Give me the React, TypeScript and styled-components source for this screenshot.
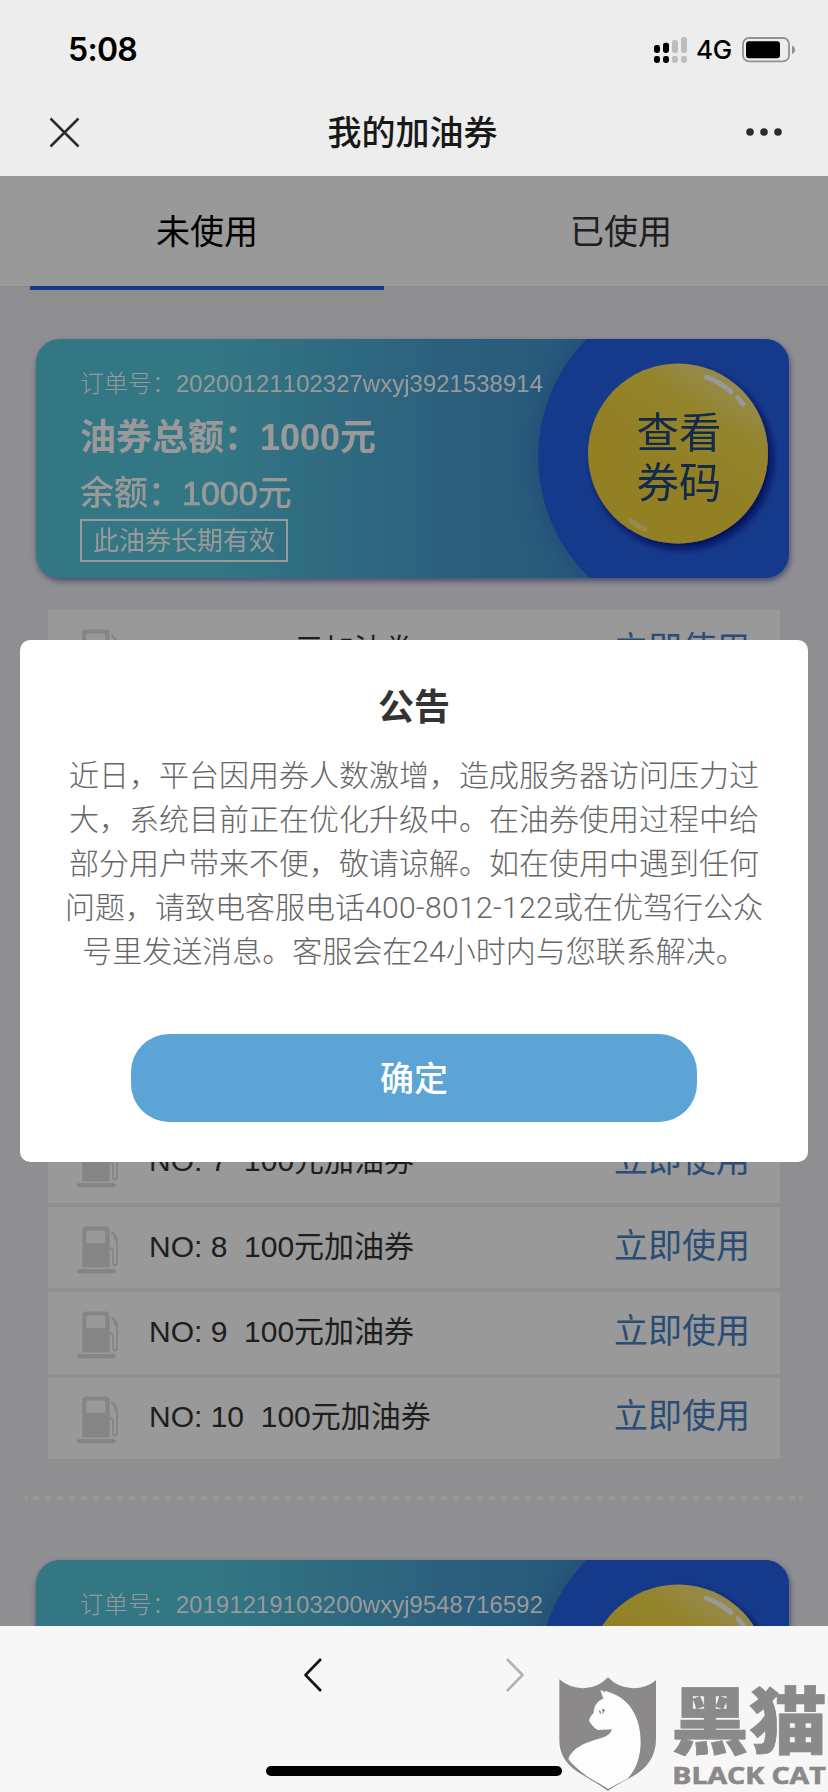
import React from "react";
import styled, { createGlobalStyle } from "styled-components";

const GlobalStyle = createGlobalStyle`
  *, *::before, *::after { box-sizing: border-box; }
  body {
    margin: 0;
    background: #efeff4;
    font-family: "Liberation Sans", "Noto Sans CJK SC", sans-serif;
    text-spacing-trim: space-all;
    font-kerning: none;
  }
  button { font-family: inherit; border: 0; padding: 0; background: none; }
`;

const Screen = styled.div`
  position: relative;
  display: flex;
  flex-direction: column;
  width: 828px;
  height: 1792px;
  overflow: hidden;
`;

const Header = styled.header`
  flex: none;
  height: 176px;
  background: #ededed;
`;

const StatusBar = styled.div`
  display: flex;
  align-items: center;
  justify-content: space-between;
  height: 88px;
  padding: 12px 32px 0 68px;
`;

const Clock = styled.span`
  font: 600 32px/40px Inter, sans-serif;
  letter-spacing: -0.7px;
  color: #000;
`;

const StatusIcons = styled.div`
  display: flex;
  align-items: center;
`;

const Network = styled.span`
  margin: 0 10px 0 8px;
  font: 500 26px/32px Inter, sans-serif;
  letter-spacing: -0.2px;
  color: #000;
`;

const NavBar = styled.div`
  display: flex;
  align-items: center;
  justify-content: space-between;
  height: 88px;
  padding: 0 45px 0 49px;
`;

const NavTitle = styled.h1`
  margin: 0;
  padding-top: 2px;
  font-size: 34px;
  line-height: 44px;
  font-weight: 500;
  color: #181818;
`;

const WebView = styled.main`
  position: relative;
  flex: none;
  height: 1450px;
  overflow: hidden;
  background: #efeff4;
`;

const Tabs = styled.nav`
  display: flex;
  height: 110px;
  background: #fff;
  box-shadow: 0 1px 0 #e4e4e6;
`;

const Tab = styled.button<{ $active?: boolean }>`
  flex: 1;
  display: flex;
  align-items: center;
  justify-content: center;
  padding-top: 2px;
  font-size: 34px;
  line-height: 44px;
  color: ${(p) => (p.$active ? "#000" : "#333")};
`;

const TabIndicator = styled.div`
  width: 354px;
  height: 4px;
  margin-left: 30px;
  position: relative;
  background: #2662e8;
`;

const Voucher = styled.section`
  position: relative;
  display: flex;
  justify-content: space-between;
  height: 239px;
  margin: 0 39px 0 36px;
  border-radius: 24px;
  overflow: hidden;
  background: linear-gradient(90deg, #55c5dc 0%, #55c5dc 24%, #489fd0 55%, #3c88cc 100%);
`;

const VoucherShadow = styled.div`
  border-radius: 24px;
  filter: drop-shadow(1px 3px 3px rgba(56, 64, 150, 0.65));
`;

const VoucherInfo = styled.div`
  position: relative;
  display: flex;
  flex-direction: column;
  align-items: flex-start;
  padding: 28px 0 0 44px;
  color: #fff;
  white-space: nowrap;
`;

const OrderNumber = styled.div`
  font-size: 24px;
  line-height: 34px;
  font-weight: 300;
`;

const Total = styled.div`
  margin-top: 10px;
  font-size: 36px;
  line-height: 54px;
  font-weight: 700;
`;

const Balance = styled.div`
  margin-top: 2px;
  font-size: 34px;
  line-height: 52px;
  font-weight: 500;
`;

const Amount = styled.span`
  -webkit-text-stroke: 0.7px currentColor;
`;

const Validity = styled.div`
  height: 43px;
  padding: 1px 11px 0;
  border: 2px solid #fff;
  font-size: 26px;
  line-height: 38px;
`;

const VoucherArt = styled.svg`
  position: absolute;
  top: 0;
  right: 0;
`;

const CodeButton = styled.button`
  position: relative;
  width: 180px;
  margin-right: 20px;
  padding-top: 1px;
  font-size: 42.5px;
  line-height: 50px;
  color: #1e467f;
  white-space: pre-line;
`;

const CouponList = styled.ul`
  list-style: none;
  margin: 32px 48px 0;
  padding: 0;
`;

const CouponRow = styled.li`
  display: flex;
  align-items: center;
  height: 85.3px;
  padding: 0 30px 0 29px;
  border-bottom: 4px solid #eeeeef;
  background: #fff;
  &:last-child {
    height: 81.3px;
    border-bottom: 0;
  }
`;

const CouponName = styled.span`
  flex: 1;
  margin-left: 31px;
  padding-bottom: 2px;
  font-size: 30px;
  line-height: 40px;
  color: #333;
  white-space: pre;
`;

const UseLink = styled.span`
  padding-bottom: 4px;
  font-size: 34px;
  line-height: 44px;
  color: #4680c4;
`;

const Divider = styled.div`
  height: 4px;
  margin: 37px 25px 60px;
  background: repeating-linear-gradient(90deg, #fff 0 6px, transparent 6px 12px) -4px 0;
`;

const Overlay = styled.div`
  position: absolute;
  inset: 0;
  display: flex;
  align-items: center;
  justify-content: center;
  background: rgba(0, 0, 0, 0.4);
`;

const Dialog = styled.div`
  display: flex;
  flex-direction: column;
  align-items: center;
  width: 788px;
  height: 522px;
  padding-top: 43px;
  border-radius: 10px;
  background: #fff;
`;

const DialogTitle = styled.h2`
  margin: 0;
  font-size: 36px;
  line-height: 50px;
  font-weight: 700;
  color: #333;
`;

const DialogText = styled.p`
  width: 708px;
  margin: 21px 0 0;
  font-family: Roboto, "Noto Sans CJK SC", sans-serif;
  font-size: 30px;
  line-height: 44px;
  font-weight: 300;
  text-align: center;
  color: #666;
`;

const Phone = styled.span`
  letter-spacing: 0.35px;
`;

const Confirm = styled.button`
  width: 566px;
  height: 88px;
  margin-top: 60px;
  padding-bottom: 4px;
  border-radius: 38px;
  background: #5ca4d6;
  color: #fff;
  font-size: 34px;
  font-weight: 500;
`;

const BottomBar = styled.footer`
  position: relative;
  flex: 1;
  display: flex;
  flex-direction: column;
  align-items: center;
  justify-content: space-between;
  padding: 32px 0 16px;
  background: #f7f7f7;
`;

const HistoryButtons = styled.div`
  display: flex;
  justify-content: space-between;
  width: 222px;
`;

const HomeIndicator = styled.div`
  width: 296px;
  height: 10px;
  border-radius: 5px;
  background: #000;
`;

const Brand = styled.svg`
  position: absolute;
  right: 0;
  bottom: 0;
`;

const SignalIcon = () => (
  <svg width="34" height="28" viewBox="0 0 34 28">
    {[8, 10.3, 13, 16].map((h, i) => (
      <g key={h} fill={i < 2 ? "#000" : "#bdbdbd"}>
        <rect x={i * 9} y={17 - h} width="6" height={h} rx="2.4" />
        <rect x={i * 9} y="20" width="6" height="7" rx="2.4" />
      </g>
    ))}
  </svg>
);

const BatteryIcon = () => (
  <svg width="54" height="26" viewBox="0 0 54 26">
    <rect x="1" y="1" width="46" height="23.4" rx="6" fill="none" stroke="#929292" strokeWidth="1.8" />
    <rect x="4" y="4.2" width="34" height="17" rx="3" fill="#000" />
    <path d="M50 8.5q3 1.2 3 4.2t-3 4.2z" fill="#929292" />
  </svg>
);

const CloseIcon = () => (
  <svg width="31" height="31" viewBox="0 0 31 31" stroke="#2b2b2b" strokeWidth="2.5">
    <path d="M1.5 1.5 29.5 29.5M29.5 1.5 1.5 29.5" />
  </svg>
);

const MoreIcon = () => (
  <svg width="38" height="10" viewBox="0 0 38 10" fill="#2b2b2b">
    <circle cx="5" cy="5" r="3.8" />
    <circle cx="19" cy="5" r="3.8" />
    <circle cx="33" cy="5" r="3.8" />
  </svg>
);

const FuelIcon = () => (
  <svg width="41" height="52" viewBox="0 -4 41 52">
    <path
      fill="#dedede"
      fillRule="evenodd"
      d="M9.3.5h19.4a4 4 0 0 1 4 4v37H5.3v-37a4 4 0 0 1 4-4zM11 4.5q-1.7 0-1.7 1.7V17h19V6.2q0-1.7-1.7-1.7z"
    />
    <rect x="0" y="43" width="38.7" height="4.6" rx="2.3" fill="#dedede" />
    <path
      d="M33 22q3 .3 3 4v10.500q0 3 2 3t2-3V13q0-2-5.500-7"
      fill="none"
      stroke="#dedede"
      strokeWidth="1.800"
    />
    <path d="M34.500 6q5.500 4 5.500 8v2q-3-1-3-4 0-3-2.500-4z" fill="#dedede" />
  </svg>
);

const Chevron = ({ forward = false }: { forward?: boolean }) => (
  <svg width="20" height="34" viewBox="0 0 20 34" fill="none" stroke={forward ? "#b2b2b2" : "#111"} strokeWidth="2.6">
    <path d={forward ? "M2 1 17.500 17 2 33" : "M18 1 2.500 17 18 33"} strokeLinejoin="round" />
  </svg>
);

const VoucherPainting = () => (
  <VoucherArt width="753" height="239" viewBox="0 0 753 239">
    <defs>
      <linearGradient id="coin" x1="0.85" y1="0.1" x2="0.5" y2="0.62">
        <stop offset="0" stopColor="#fbe886" />
        <stop offset="0.45" stopColor="#f5dc48" />
        <stop offset="1" stopColor="#f5d43c" />
      </linearGradient>
      <filter id="coinShadow" x="-20%" y="-20%" width="140%" height="140%">
        <feDropShadow dx="4" dy="5" stdDeviation="4" floodColor="#00108c" floodOpacity="0.95" />
      </filter>
      <filter id="discShadow" x="-20%" y="-20%" width="140%" height="140%">
        <feDropShadow dx="-5" dy="0" stdDeviation="14" floodColor="#2662b8" floodOpacity="0.5" />
      </filter>
    </defs>
    <circle cx="670" cy="118" r="168" fill="#2662e8" filter="url(#discShadow)" />
    <circle cx="642" cy="114.500" r="90" fill="url(#coin)" filter="url(#coinShadow)" />
    <g fill="none" stroke="#fff" strokeWidth="5" strokeLinecap="round">
      <path d="M670.500 38q14 5.500 24.500 14.500" />
      <path d="M702 59l5 6" />
      <path d="M595 182q7 5.500 14 8.500" stroke="#fdf5b0" strokeOpacity="0.6" />
    </g>
  </VoucherArt>
);

const VoucherCard = ({ order }: { order: string }) => (
  <VoucherShadow>
    <Voucher>
      <VoucherPainting />
      <VoucherInfo>
        <OrderNumber>订单号：{order}</OrderNumber>
        <Total>油券总额：1000元</Total>
        <Balance>
          余额：<Amount>1000</Amount>元
        </Balance>
        <Validity>此油券长期有效</Validity>
      </VoucherInfo>
      <CodeButton>{"查看\n券码"}</CodeButton>
    </Voucher>
  </VoucherShadow>
);

const VoucherArea = styled.div`
  padding-top: 49px;
`;

const BlackCat = () => (
  <Brand width="298" height="152" viewBox="0 0 894 456">
    <path
      d="M88 118Q118 144 160 145Q205 144 234 112Q263 144 310 145Q350 144 378 121V298C378 350 350 386 310 408C275 427 250 440 234 453C215 438 190 425 158 405C115 380 88 350 88 298Z"
      fill="#8c898a"
    />
    <path
      d="M211 149L225 157 226 152 237 157C300 175 332 235 332 305C332 350 318 390 292 416C270 428 248 438 234 447C210 430 175 415 150 392Q125 372 115 357C122 335 145 316 185 303C215 294 240 290 246 268L203 270C190 262 184 251 178 245C177 232 186 225 191 218C191 198 203 181 220 176Z"
      fill="#fdfdfd"
    />
    <path d="M206 211q8 0 7 11q-6-3-7-11zM215 208l9-1q1 10-8 15q4-7-1-14z" fill="#8c898a" />
    <g fill="#8c898a" stroke="#8c898a">
      <text
        x="423"
        y="324"
        fontSize="218"
        fontWeight="900"
        fontFamily="Noto Sans CJK SC, sans-serif"
        strokeWidth="2"
        textLength="468"
        lengthAdjust="spacingAndGlyphs"
      >
        黑猫
      </text>
      <text
        x="427"
        y="433"
        fontSize="68"
        fontWeight="700"
        fontFamily="Open Sans, sans-serif"
        strokeWidth="2"
        textLength="460"
        lengthAdjust="spacingAndGlyphs"
      >
        BLACK CAT
      </text>
    </g>
  </Brand>
);

const coupons = Array.from({ length: 10 }, (_, i) => i + 1);

export default function App() {
  return (
    <Screen>
      <GlobalStyle />
      <Header>
        <StatusBar>
          <Clock>5:08</Clock>
          <StatusIcons>
            <SignalIcon />
            <Network>4G</Network>
            <BatteryIcon />
          </StatusIcons>
        </StatusBar>
        <NavBar>
          <CloseIcon />
          <NavTitle>我的加油券</NavTitle>
          <MoreIcon />
        </NavBar>
      </Header>
      <WebView>
        <Tabs>
          <Tab $active>未使用</Tab>
          <Tab>已使用</Tab>
        </Tabs>
        <TabIndicator />
        <VoucherArea>
          <VoucherCard order="20200121102327wxyj3921538914" />
        </VoucherArea>
        <CouponList>
          {coupons.map((no) => (
            <CouponRow key={no}>
              <FuelIcon />
              <CouponName>{`NO: ${no}  100元加油券`}</CouponName>
              <UseLink>立即使用</UseLink>
            </CouponRow>
          ))}
        </CouponList>
        <Divider />
        <VoucherCard order="20191219103200wxyj9548716592" />
        <Overlay>
          <Dialog>
            <DialogTitle>公告</DialogTitle>
            <DialogText>
              近日，平台因用券人数激增，造成服务器访问压力过大，系统目前正在优化升级中。在油券使用过程中给部分用户带来不便，敬请谅解。如在使用中遇到任何问题，请致电客服电话<Phone>400-8012-122</Phone>或在优驾行公众号里发送消息。客服会在24小时内与您联系解决。
            </DialogText>
            <Confirm>确定</Confirm>
          </Dialog>
        </Overlay>
      </WebView>
      <BottomBar>
        <HistoryButtons>
          <Chevron />
          <Chevron forward />
        </HistoryButtons>
        <HomeIndicator />
        <BlackCat />
      </BottomBar>
    </Screen>
  );
}
